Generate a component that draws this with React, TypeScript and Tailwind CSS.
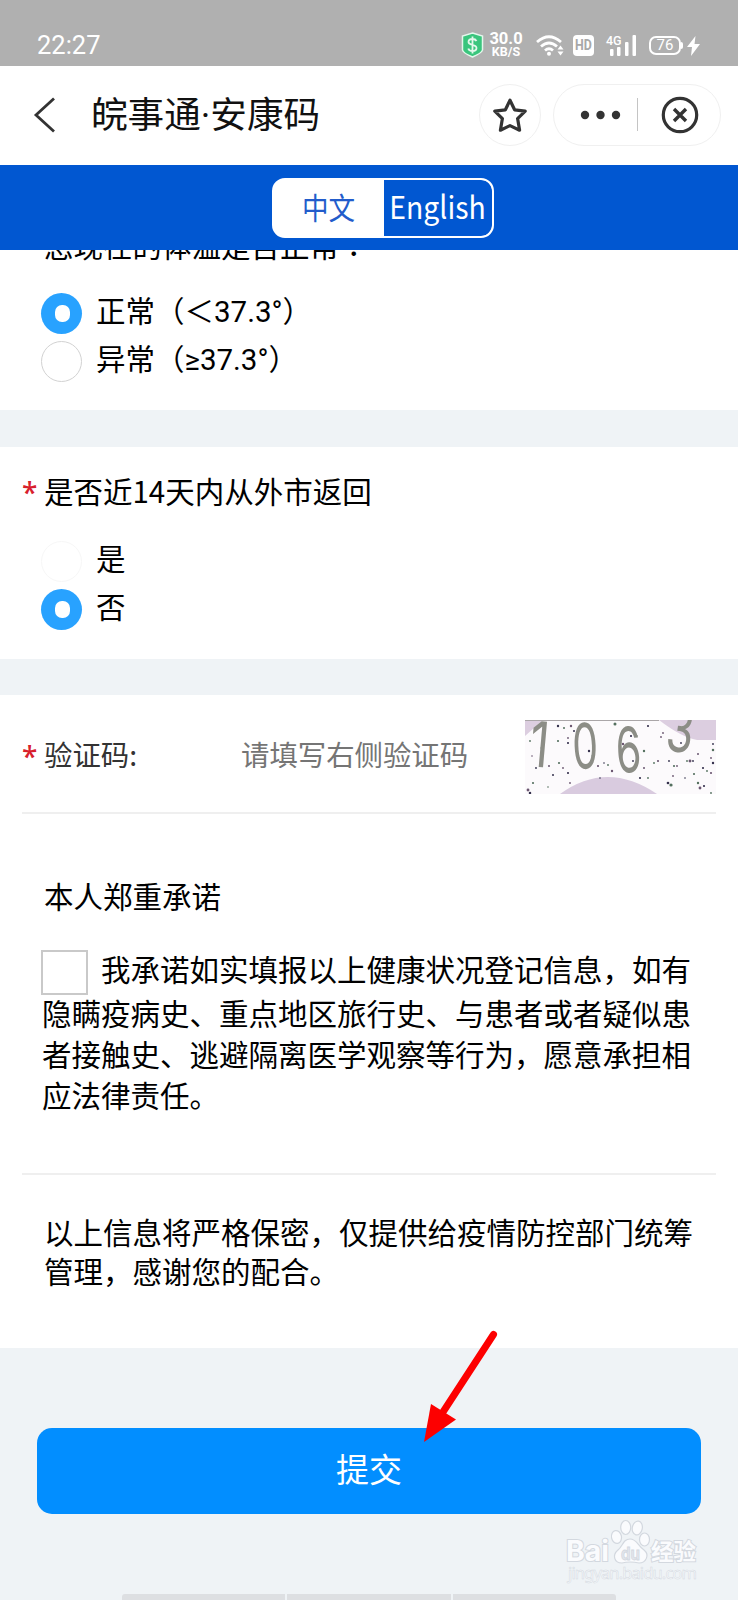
import { useState } from "react";

type RadioProps = {
  label: string;
  checked: boolean;
  faint?: boolean;
  onSelect: () => void;
};

// x, y, radius of the noise dots inside the captcha
const NOISE = [
  [33, 6, 1.3], [39, 8, 1.1], [46, 6, 1.3], [49, 11, 1.1], [33, 21, 1.2], [43, 18, 1], [43, 23, 1.2],
  [5, 21, 1], [7, 36, 0.9], [11, 48, 1], [17, 28, 1.6], [24, 46, 1.1], [28, 55, 1.1], [34, 43, 1.2],
  [38, 48, 1], [43, 53, 1.2], [8, 63, 1.2], [3, 70, 1.6], [5, 73, 1.4], [23, 67, 0.9], [45, 63, 1],
  [64, 31, 1.3], [68, 36, 1.7], [73, 46, 1.2], [79, 43, 0.9], [83, 45, 1], [87, 51, 1.3], [75, 58, 0.9],
  [90, 4, 1.7], [98, 24, 1.3], [106, 16, 1.2], [112, 16, 0.9], [112, 34, 1.1], [108, 41, 1], [119, 31, 1.3],
  [119, 48, 1.1], [123, 6, 1.2], [129, 43, 1], [133, 41, 1.2], [115, 58, 1.2], [123, 58, 1], [136, 17, 1],
  [144, 41, 1], [149, 46, 1.2], [152, 46, 1], [143, 63, 1.5], [146, 65, 1.8], [148, 56, 1], [156, 23, 1],
  [162, 41, 1], [165, 41, 1.6], [168, 41, 1], [169, 54, 1.2], [173, 34, 1.1], [178, 48, 1.2], [182, 51, 1],
  [186, 53, 1.2], [188, 24, 1], [188, 30, 1.4], [186, 38, 1], [188, 43, 1.3], [173, 63, 1.3], [175, 68, 1.6],
  [179, 66, 1.2], [186, 73, 1], [138, 13, 1], [160, 58, 0.9],
];

function Star() {
  return (
    <svg className="size-9" viewBox="0 0 36 36" fill="none" stroke="#333" strokeWidth="3.2" strokeLinejoin="round">
      <path d="M18 3.2L22.600 12.800L33.200 14.200L25.600 21.600L27.600 33.200L18 28.600L8.400 33.200L10.400 21.600L2.800 14.200L13.400 12.800Z" />
    </svg>
  );
}

function StatusBar() {
  return (
    <div className="flex h-[66px] items-end bg-[#b0b0b0] pl-[37px] pb-[8px] text-white">
      <span className="w-[424px] font-[Roboto] text-[25.5px] leading-[26px]">22:27</span>
      <svg className="h-[26px] w-[23px]" viewBox="0 0 23 26">
        <path d="M11.5 1L21.5 4V18Q21 21 11.5 25Q2 21 1.5 18V4Z" fill="#3ac57d" stroke="#e4f7ec" strokeWidth="1.5" />
        <path d="M15.5 9Q14.5 7 11.5 7Q7.5 7 7.5 10C7.5 14 15.5 11.5 15.5 16Q15.5 19 11.5 19Q8 19 7.3 16.5M11.5 4.5V21.5" fill="none" stroke="#e4f7ec" strokeWidth="1.8" />
      </svg>
      <div className="ml-[4px] w-[36px] text-center font-[Roboto] font-bold">
        <p className="text-[16.5px] leading-[14px]">30.0</p>
        <p className="text-[12.5px] leading-[12px]">KB/S</p>
      </div>
      <svg className="ml-[12px] h-[24px] w-[29px]" viewBox="0 0 29 24" fill="none" stroke="white" strokeWidth="2.8">
        <path d="M1 8Q13 -2.5 25 8M5 12.5Q13 5.5 21 12.5M9 16.5Q13 13 17 16.5" />
        <circle cx="13" cy="19.8" r="2" fill="white" stroke="none" />
        <path d="M21.5 15.5L24.5 11.5L27.5 15.5ZM21.5 17.5L24.5 21.5L27.5 17.5Z" fill="white" stroke="none" />
      </svg>
      <div className="ml-[8px] mb-[2px] flex h-[21px] w-[21px] items-center justify-center rounded-[4px] bg-white font-[Roboto] text-[15.5px] leading-none font-bold text-[#a8a8a8]">
        <span className="scale-x-[.8]">HD</span>
      </div>
      <div className="ml-[12px] flex h-[24px] items-start">
        <span className="w-[4px] font-[Roboto] text-[12.500px] leading-[13px] font-medium">4G</span>
        <svg className="h-[24px] w-[28px]" viewBox="0 0 28 24" fill="white">
          <rect x="0" y="15" width="3.5" height="7" rx="1" />
          <rect x="7" y="13" width="3.5" height="9" rx="1" />
          <rect x="15" y="8" width="3.5" height="14" rx="1" />
          <rect x="22.500" y="1" width="3.5" height="21" rx="1" />
        </svg>
      </div>
      <div className="ml-[11px] mb-[3px] flex h-[19px] w-[32px] items-center justify-center rounded-[7px] border-2 border-white font-[Roboto] text-[15px] leading-none">
        76
      </div>
      <div className="mb-[9px] h-[7px] w-[2px] rounded-r bg-white" />
      <svg className="ml-[3px] mb-[1px] h-[22px] w-[15px]" viewBox="0 0 15 22" fill="white">
        <path d="M9.500 1L1 12H6L5 21L14 9H8.500Z" />
      </svg>
    </div>
  );
}

function TitleBar() {
  return (
    <div className="flex h-[99px] items-center bg-white pb-[2px] pl-[32px]">
      <svg className="h-[36px] w-[24px]" viewBox="0 0 24 36" fill="none" stroke="#333" strokeWidth="2.8">
        <path d="M22 1.500L4 18L22 34.500" />
      </svg>
      <h1 className="ml-[35px] w-[388px] text-[36.6px] leading-none whitespace-nowrap text-[#111]">
        皖事通<span className="font-[Roboto]">·</span>安康码
      </h1>
      <button className="flex size-[62px] items-center justify-center rounded-full border border-[#f0f0f0]">
        <Star />
      </button>
      <div className="ml-[12px] flex h-[62px] w-[168px] items-center rounded-full border border-[#f0f0f0]">
        <svg className="ml-[26px] h-[10px] w-[42px]" viewBox="0 0 42 10" fill="#333">
          <circle cx="5" cy="5" r="4.200" />
          <circle cx="20.500" cy="5" r="4.200" />
          <circle cx="36" cy="5" r="4.200" />
        </svg>
        <div className="ml-[15px] h-[33px] w-px bg-[#c4c4c4]" />
        <svg className="ml-[23px] size-[38px]" viewBox="0 0 38 38" fill="none" stroke="#333">
          <circle cx="19" cy="19" r="16.700" strokeWidth="3.200" />
          <path d="M13 13L25 25M25 13L13 25" strokeWidth="3.400" />
        </svg>
      </div>
    </div>
  );
}

function LanguageSwitch() {
  return (
    <div className="relative z-10 flex h-[85px] items-center justify-center bg-[#0157d1] pl-[28px]">
      <div className="flex h-[60px] w-[222px] overflow-hidden rounded-[13px] border-2 border-white bg-white">
        <button className="flex w-[110px] items-center justify-center bg-white pb-[2px] text-[29.500px] text-[#225ccb]">
          <span className="scale-x-90">中文</span>
        </button>
        <button className="flex w-[108px] items-center justify-center rounded-r-[11px] bg-[#0157d1] pb-[3px] text-[31.500px] text-white">
          <span className="scale-x-90">English</span>
        </button>
      </div>
    </div>
  );
}

function Radio({ label, checked, faint, onSelect }: RadioProps) {
  return (
    <div className="flex h-[48px] cursor-pointer items-center" onClick={onSelect}>
      {checked ? (
        <span className="flex size-[41px] items-center justify-center rounded-full bg-[#28a2ff]">
          <span className="ml-[2px] h-[17px] w-[15px] rounded-[7px] bg-white" />
        </span>
      ) : (
        <span className={`size-[41px] rounded-full border ${faint ? "border-[#f7f7f7]" : "border-[#d2d2d2]"}`} />
      )}
      <span className="ml-[14px] font-[Roboto,'Noto_Sans_CJK_SC',sans-serif] whitespace-nowrap">
        {label}
      </span>
    </div>
  );
}

function Required() {
  return <span className="mt-[2px] w-[22px] font-['Noto_Sans'] text-[28px] leading-none font-medium text-[#d8202c]">*</span>;
}

function Captcha() {
  return (
    <svg className="h-[74px] w-[191px]" viewBox="0 0 191 74">
      <rect width="191" height="74" fill="#fcfafc" />
      <path d="M35 74Q82 40 132 74Z" fill="#d9cbdf" />
      <path d="M134 0H191V20H172Q156 17 134 0Z" fill="#dccee0" />
      <path d="M0 0H18L0 16Z" fill="#dccee0" />
      <path d="M0 0.500H134" stroke="#aaa6a8" />
      {NOISE.map(([x, y, r], i) => (
        <circle key={i} cx={x} cy={y} r={r * 0.9} fill={i % 3 === 0 ? "#34304c" : i % 3 === 1 ? "#54705f" : "#6a5670"} />
      ))}
      <g fontFamily="Inter, sans-serif" fontSize="63" fontWeight="400" fill="#8c8d86">
        <text transform="translate(3 46) rotate(5) scale(.75 1)">1</text>
        <text transform="translate(48 49) rotate(-2) scale(.65 1)">0</text>
        <text transform="translate(92 53) rotate(-3) scale(.65 1)">6</text>
        <text transform="translate(139 30) rotate(8) scale(.7 1)">3</text>
      </g>
    </svg>
  );
}

function Arrow() {
  return (
    <svg className="absolute top-[1328px] left-[418px] h-[120px] w-[86px]" viewBox="0 0 86 120">
      <path d="M75.500 6.500L25 84" stroke="#fd0000" strokeWidth="7" strokeLinecap="round" />
      <path d="M6 114L13 76L38 91.500Z" fill="#fd0000" />
    </svg>
  );
}

function Watermark() {
  return (
    <svg className="absolute top-[1514px] left-[560px] h-[76px] w-[150px]" viewBox="0 0 150 76" fill="#fafbfd" stroke="#d3d8df">
      <g strokeWidth="2" paintOrder="stroke" fontWeight="bold">
        <text x="6" y="47" fontFamily="Inter" fontSize="28" textLength="43" lengthAdjust="spacingAndGlyphs">Bai</text>
        <text x="91" y="46" fontFamily="'Noto Sans CJK SC'" fontSize="22.500" textLength="45">经验</text>
      </g>
      <g strokeWidth="1.200">
        <ellipse cx="56.500" cy="23" rx="5" ry="6.500" transform="rotate(-12 56.500 23)" />
        <ellipse cx="65.700" cy="13.500" rx="5" ry="7" />
        <ellipse cx="77.300" cy="14" rx="5" ry="7" transform="rotate(12 77.300 14)" />
        <ellipse cx="84.500" cy="25.500" rx="5" ry="6.500" />
        <path d="M70 25C77 25 78 32 84 36C90 41 86 49 79 49Q70 47 62 49C54 49 52 41 58 36C63 32 63 25 70 25Z" />
      </g>
      <text x="61" y="46" fontFamily="Inter" fontSize="17" fontWeight="bold" fill="#e2e6ec" strokeWidth=".8" textLength="19" lengthAdjust="spacingAndGlyphs">du</text>
      <text x="8" y="65" fontFamily="'Noto Sans'" fontSize="16.500" strokeWidth=".5" fill="#f8fafc" textLength="129">jingyan.baidu.com</text>
    </svg>
  );
}

export default function App() {
  const [temperature, setTemperature] = useState("normal");
  const [returned, setReturned] = useState("no");
  const [agreed, setAgreed] = useState(false);

  return (
    <div className="relative h-[1600px] w-[738px] overflow-hidden bg-[#eff3f6] font-['Noto_Sans_CJK_SC',sans-serif] text-[29.500px] leading-none text-black">
      <StatusBar />
      <TitleBar />
      <LanguageSwitch />

      <section className="flow-root h-[160px] bg-white pl-[41px]">
        <p className="-mt-[20px] ml-[3px] h-[59px] font-['Noto_Sans_CJK_TC',sans-serif] whitespace-nowrap">
          您现在的体温是否正常：
        </p>
        <Radio label="正常（＜37.3°）" checked={temperature === "normal"} onSelect={() => setTemperature("normal")} />
        <Radio label="异常（≥37.3°）" checked={temperature === "high"} onSelect={() => setTemperature("high")} />
      </section>

      <section className="mt-[37px] h-[212px] bg-white pt-[29px] pl-[22px]">
        <div className="flex h-[61px]">
          <Required />
          <p>是否近14天内从外市返回</p>
        </div>
        <div className="pl-[19px]">
          <Radio label="是" faint checked={returned === "yes"} onSelect={() => setReturned("yes")} />
          <Radio label="否" checked={returned === "no"} onSelect={() => setReturned("no")} />
        </div>
      </section>

      <section className="mt-[36px] h-[653px] bg-white px-[22px] pt-[25px]">
        <div className="flex h-[94px] border-b-2 border-[#efefef]">
          <div className="flex pt-[20px] text-[28.400px]">
            <Required />
            <label className="w-[197px] text-[#333]">验证码:</label>
            <input
              className="-mt-[2px] h-[30px] w-[284px] text-[28.400px] leading-none outline-none placeholder:text-[#757575]"
              placeholder="请填写右侧验证码"
            />
          </div>
          <Captcha />
        </div>
        <h2 className="mt-[67px] ml-[22px]">本人郑重承诺</h2>
        <div className="mt-[39px] ml-[19px] flex items-start">
          <button
            className="h-[45px] w-[47px] border-2 border-[#c9c9c9] text-[#28a2ff]"
            onClick={() => setAgreed(!agreed)}
          >
            {agreed && "✓"}
          </button>
          <span className="mt-[4px] ml-[13px] whitespace-nowrap">我承诺如实填报以上健康状况登记信息，如有</span>
        </div>
        <p className="-mt-[3px] ml-[20px] w-[652px] leading-[41.300px]">
          隐瞒疫病史、重点地区旅行史、与患者或者疑似患者接触史、逃避隔离医学观察等行为，愿意承担相应法律责任。
        </p>
        <div className="mt-[58px] h-[2px] bg-[#efefef]" />
        <p className="mt-[37px] ml-[22px] w-[652px] leading-[39px]">
          以上信息将严格保密，仅提供给疫情防控部门统筹管理，感谢您的配合。
        </p>
      </section>

      <button className="mt-[80px] ml-[37px] flex h-[86px] w-[664px] items-center justify-center rounded-[15px] bg-[#028eff] pb-[5px] text-[33px] text-white">
        提交
      </button>
      <div className="mt-[80px] ml-[122px] flex h-[6px] w-[494px] gap-[2px] overflow-hidden rounded-t-[3px]">
        <div className="flex-1 bg-[#dddfe2]" />
        <div className="flex-1 bg-[#dddfe2]" />
        <div className="flex-1 bg-[#dddfe2]" />
      </div>

      <Arrow />
      <Watermark />
    </div>
  );
}
